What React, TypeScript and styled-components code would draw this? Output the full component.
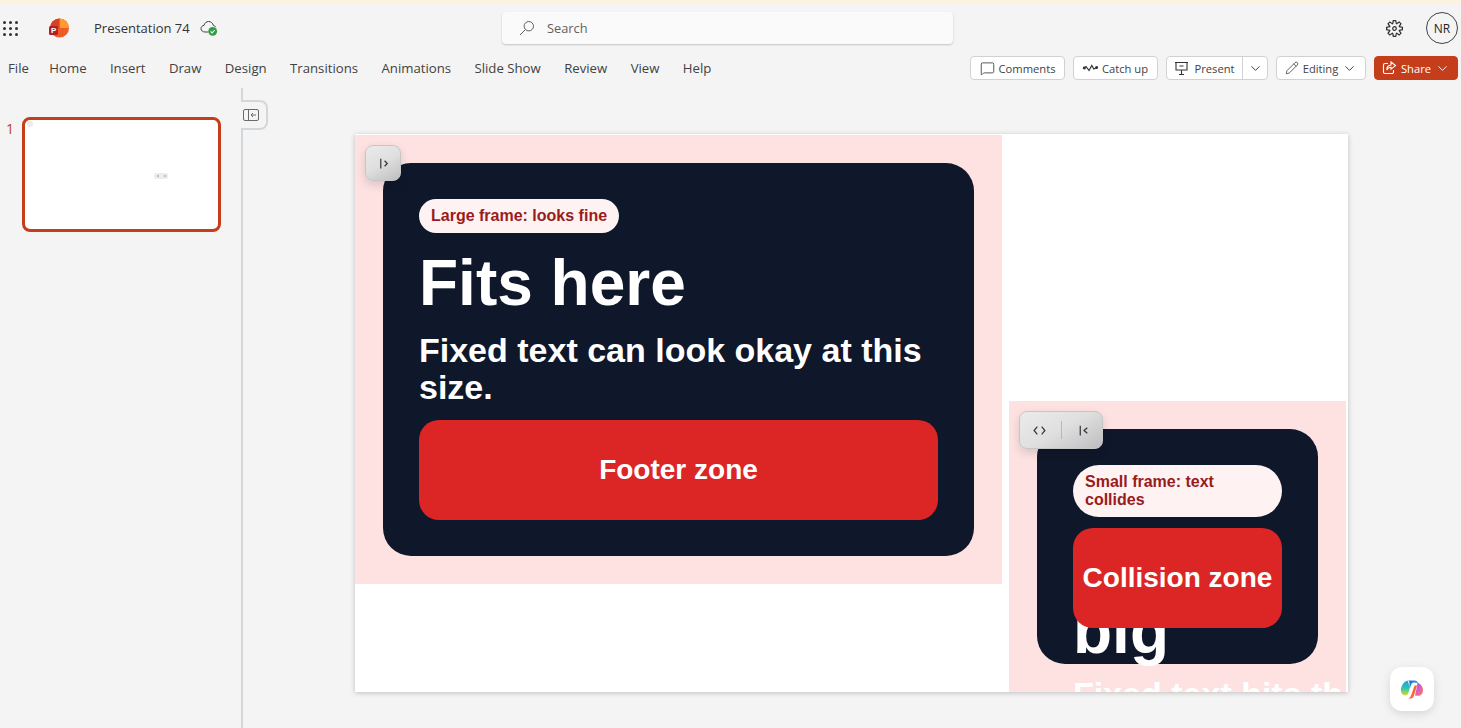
import React from 'react';
import styled, { createGlobalStyle } from 'styled-components';
import { ChevronDown, MessageSquare, Pencil } from 'lucide-react';
import { VscSettingsGear } from 'react-icons/vsc';

const Global = createGlobalStyle`
  html, body {
    margin: 0;
    height: 100%;
    overflow: hidden;
    background: #f4f4f4;
  }
  * {
    box-sizing: border-box;
  }
`;

const uiFont = `'Open Sans', 'Noto Sans', sans-serif`;
const slideFont = `'Liberation Sans', Arial, sans-serif`;

const Page = styled.div`
  height: 728px;
  display: flex;
  flex-direction: column;
  background: #f4f4f4;
  border-top: 3px solid #fdf1df;
  font-family: ${uiFont};
  color: #3b3b3b;
  overflow: hidden;
`;

const TitleBar = styled.header`
  height: 50px;
  flex: none;
  display: grid;
  grid-template-columns: 502px 451px 1fr;
  align-items: center;
`;

const TitleLeft = styled.div`
  display: flex;
  align-items: center;
`;

const Waffle = styled.div`
  margin-left: 3px;
  width: 15px;
  display: grid;
  grid-template-columns: repeat(3, 3px);
  gap: 3px;
`;

const Dot = styled.span`
  width: 3px;
  height: 3px;
  border-radius: 50%;
  background: #333;
`;

const DocName = styled.span`
  margin-left: 25px;
  font-size: 13px;
  color: #333;
`;

const LogoSvg = styled.svg`
  margin-left: 31px;
`;

const CloudSvg = styled.svg`
  margin-left: 9px;
`;

const SearchBox = styled.div`
  height: 32px;
  display: flex;
  align-items: center;
  gap: 12px;
  padding-left: 17px;
  background: #fafafa;
  border-radius: 4px;
  box-shadow: 0 1px 2px rgba(0, 0, 0, 0.2);
  font-size: 12.8px;
  color: #616161;
`;

const TitleRight = styled.div`
  display: flex;
  align-items: center;
  justify-content: flex-end;
  gap: 23px;
  padding-right: 3px;
`;

const Avatar = styled.div`
  width: 32px;
  height: 32px;
  border: 1px solid #424242;
  border-radius: 50%;
  display: flex;
  align-items: center;
  justify-content: center;
  font-size: 12px;
  color: #242424;
`;

const Ribbon = styled.nav`
  height: 32px;
  flex: none;
  display: flex;
  align-items: center;
  justify-content: space-between;
  padding: 0 3px 2px 8px;
`;

const Tabs = styled.div`
  display: flex;
  gap: 23.4px;
  font-size: 13.2px;
  color: #424242;
`;

const Tab = styled.span`
  &:first-child {
    margin-right: -3px;
  }
`;

const Actions = styled.div`
  display: flex;
  gap: 8px;
`;

const ActionButton = styled.button<{ $width: number; $primary?: boolean }>`
  width: ${(p) => p.$width}px;
  height: 24px;
  padding: 0;
  display: flex;
  align-items: center;
  justify-content: center;
  gap: 4px;
  border: 1px solid ${(p) => (p.$primary ? '#c43e1c' : '#d1d1d1')};
  border-radius: 4px;
  background: ${(p) => (p.$primary ? '#c43e1c' : '#fff')};
  color: ${(p) => (p.$primary ? '#fff' : '#424242')};
  font-family: ${uiFont};
  font-size: 11.2px;
`;

const SplitButton = styled.div`
  width: 102px;
  height: 24px;
  display: flex;
  border: 1px solid #d1d1d1;
  border-radius: 4px;
  background: #fff;
  font-size: 11.2px;
  color: #424242;
`;

const SplitMain = styled.div`
  flex: 1;
  display: flex;
  align-items: center;
  justify-content: center;
  gap: 5px;
  border-right: 1px solid #d1d1d1;
`;

const SplitArrow = styled.div`
  width: 24px;
  display: flex;
  align-items: center;
  justify-content: center;
`;

const Workspace = styled.main`
  flex: 1;
  min-height: 0;
  display: flex;
`;

const Sidebar = styled.aside`
  position: relative;
  width: 243px;
  flex: none;
  margin-top: 3px;
  padding: 29px 0 0 6px;
  display: flex;
  align-items: flex-start;
  gap: 8px;
  border-right: 2px solid #d3d6da;
`;

const SlideNumber = styled.span`
  margin-top: 2px;
  font-size: 14px;
  line-height: 20px;
  color: #c43e1c;
`;

const Thumb = styled.div`
  position: relative;
  width: 199px;
  height: 115px;
  background: #fff;
  border: 3px solid #c43e1c;
  border-radius: 8px;
`;

const ThumbMark = styled.span<{ $left: number; $top: number; $width: number }>`
  position: absolute;
  left: ${(p) => p.$left}px;
  top: ${(p) => p.$top}px;
  width: ${(p) => p.$width}px;
  height: 6px;
  display: flex;
  align-items: center;
  justify-content: space-around;
  border-radius: 2px;
  background: #ececec;
`;

const ThumbDot = styled.span`
  width: 2px;
  height: 2px;
  background: #bdbdbd;
`;

const CollapseTab = styled.div`
  position: absolute;
  top: 12px;
  left: 241px;
  width: 27px;
  height: 30px;
  padding-left: 2px;
  display: flex;
  align-items: center;
  background: #f4f4f4;
  border: 2px solid #d3d6da;
  border-left: none;
  border-radius: 0 8px 8px 0;
`;

const Canvas = styled.section`
  flex: 1;
  padding: 49px 0 0 112px;
`;

const Slide = styled.div`
  position: relative;
  width: 993px;
  height: 558px;
  background: #fff;
  overflow: hidden;
  box-shadow: 0 1px 5px rgba(0, 0, 0, 0.22);
`;

const Frame = styled.div<{ $left: number; $top: number; $width: number; $height: number }>`
  position: absolute;
  left: ${(p) => p.$left}px;
  top: ${(p) => p.$top}px;
  width: ${(p) => p.$width}px;
  height: ${(p) => p.$height}px;
  padding: 28px;
  background: #fee2e2;
  font-family: ${slideFont};
  font-weight: 700;
`;

const Card = styled.div<{ $height: number }>`
  position: relative;
  height: ${(p) => p.$height}px;
  padding: 36px;
  display: flex;
  flex-direction: column;
  align-items: flex-start;
  background: #0f172a;
  border-radius: 28px;
  color: #fff;
`;

const Pill = styled.div<{ $small?: boolean }>`
  width: ${(p) => (p.$small ? '100%' : 'auto')};
  flex: none;
  padding: 8px 12px;
  border-radius: 26px;
  background: #fef2f2;
  color: #991b1b;
  font-size: 16px;
  line-height: 18px;
`;

const Heading = styled.div<{ $top: number }>`
  margin-top: ${(p) => p.$top}px;
  font-size: 64px;
  line-height: 64px;
`;

const Body = styled.div<{ $top: number; $nowrap?: boolean }>`
  margin-top: ${(p) => p.$top}px;
  font-size: 34px;
  line-height: 37.4px;
  white-space: ${(p) => (p.$nowrap ? 'nowrap' : 'normal')};
`;

const Zone = styled.div<{ $top: number }>`
  position: absolute;
  top: ${(p) => p.$top}px;
  left: 36px;
  right: 36px;
  height: 100px;
  display: flex;
  align-items: center;
  justify-content: center;
  background: #dc2626;
  border-radius: 20px;
  font-size: 28px;
  white-space: nowrap;
`;

const FloatBar = styled.div<{ $left: number; $top: number; $width: number; $height: number }>`
  position: absolute;
  left: ${(p) => p.$left}px;
  top: ${(p) => p.$top}px;
  width: ${(p) => p.$width}px;
  height: ${(p) => p.$height}px;
  display: flex;
  align-items: center;
  justify-content: center;
  gap: 15px;
  background: linear-gradient(150deg, #ecebeb 0%, #e0dfdf 50%, #bdbdc0 100%);
  border: 1px solid #c6c6c6;
  border-radius: 8px;
  box-shadow: 0 4px 10px rgba(0, 0, 0, 0.14);
`;

const BarDivider = styled.span`
  width: 1px;
  height: 18px;
  background: #b9b9b9;
`;

const CopilotButton = styled.div`
  position: absolute;
  left: 1390px;
  top: 667px;
  width: 44px;
  height: 44px;
  display: flex;
  align-items: center;
  justify-content: center;
  background: #fff;
  border-radius: 12px;
  box-shadow: 0 3px 10px rgba(0, 0, 0, 0.12);
`;

const PptLogo = () => (
  <LogoSvg width="20" height="20" viewBox="0 0 20 20">
    <circle cx="10.5" cy="10" r="9.5" fill="#ef5a28" />
    <path d="M10.5 .5a9.5 9.5 0 0 1 9.5 9.5h-9.5z" fill="#ff9a2e" />
    <path d="M1 10a9.5 9.5 0 0 1 9.5-9.5V10z" fill="#d9401f" />
    <rect x="0" y="8" width="9" height="9" rx="1.5" fill="#b01f2c" />
    <text x="2.1" y="15.4" fontSize="8" fontWeight="700" fontFamily={slideFont} fill="#fff">
      P
    </text>
  </LogoSvg>
);

const CloudCheck = () => (
  <CloudSvg width="19" height="18" viewBox="0 0 19 18" fill="none">
    <path
      d="M6 13C3.8 13 2 11.6 2 9.6 2 7.8 3.4 6.5 5 6.4 5.6 4 7.4 2.5 9.6 2.5c2.4 0 4.2 1.6 4.7 3.9 1 .1 2 .8 2.3 1.8"
      stroke="#424242"
      strokeWidth="1"
    />
    <path d="M6 13h3.5" stroke="#424242" strokeWidth="1" />
    <circle cx="13.7" cy="12.3" r="4.4" fill="#2f9e44" />
    <path d="M11.6 12.4l1.5 1.5 2.7-2.9" stroke="#fff" strokeWidth="1.1" />
  </CloudSvg>
);

const SearchGlyph = () => (
  <svg width="16" height="16" viewBox="0 0 16 16" fill="none" stroke="#616161" strokeWidth="1">
    <circle cx="9.8" cy="6.2" r="4.7" />
    <path d="M6.4 9.6L1 15" />
  </svg>
);

const CatchUpGlyph = () => (
  <svg width="15" height="10" viewBox="0 0 15 10" fill="none" stroke="#333" strokeWidth="1.2">
    <path d="M1 5l2-1.5L6 7.5 8.8 2.5 10.8 6l3-1.5" />
    <circle cx="1.3" cy="5" r="0.9" fill="#333" />
    <circle cx="13.6" cy="4.6" r="0.9" fill="#333" />
  </svg>
);

const PresentGlyph = () => (
  <svg width="15" height="15" viewBox="0 0 15 15" fill="none" stroke="#333" strokeWidth="1.1">
    <path d="M1 1.5h13M2 1.5v7.5h11V1.5M5.5 5h4M7.5 9v4M5 13.5h5" />
  </svg>
);

const ShareGlyph = () => (
  <svg width="15" height="14" viewBox="0 0 15 14" fill="none" stroke="#fff" strokeWidth="1.1">
    <path d="M6 2.5H3A1.5 1.5 0 0 0 1.5 4v7A1.5 1.5 0 0 0 3 12.5h7a1.5 1.5 0 0 0 1.5-1.5V9" />
    <path d="M9 1l4.5 3.6L9 8.2V6.2C7 6.2 5.6 7 4.8 9c0-3 1.6-4.8 4.2-5z" />
  </svg>
);

const PanelGlyph = () => (
  <svg width="16" height="12" viewBox="0 0 16 12" fill="none" stroke="#6a6a6a" strokeWidth="1">
    <rect x="0.5" y="0.5" width="15" height="11" rx="1.5" />
    <path d="M5.5 0.5v11M13 6H8M10 4L8 6l2 2" />
  </svg>
);

const BarGlyph = ({ d }: { d: string }) => (
  <svg width="13" height="13" viewBox="0 0 12 12" fill="none" stroke="#333" strokeWidth="1.1">
    <path d={d} />
  </svg>
);

const CopilotLogo = () => (
  <svg width="24" height="24" viewBox="0 0 24 24">
    <defs>
      <linearGradient id="cpA" x1="0" y1="0" x2="0" y2="1">
        <stop offset="0" stopColor="#1f9be8" />
        <stop offset="0.55" stopColor="#35c7a5" />
        <stop offset="1" stopColor="#e6d82f" />
      </linearGradient>
      <linearGradient id="cpB" x1="0" y1="0" x2="1" y2="1">
        <stop offset="0" stopColor="#a35bdc" />
        <stop offset="0.6" stopColor="#e85fb0" />
        <stop offset="1" stopColor="#f78a3a" />
      </linearGradient>
      <linearGradient id="cpC" x1="0" y1="0" x2="1" y2="0">
        <stop offset="0" stopColor="#1a6fdc" />
        <stop offset="1" stopColor="#1f9be8" />
      </linearGradient>
    </defs>
    <path d="M7.5 3.5C4 4.5 1.5 8 1 12c-.4 3.5 1.2 6.5 4 6.5 2 0 3-1.3 3.6-3.3L10 10z" fill="url(#cpA)" />
    <path d="M8 3.5h6.5c2 0 3 1 3.5 2.6L14 5.5c-1.5 0-2.5.8-3 2.5l-1 3C9.5 6 9.5 4 8 3.5z" fill="url(#cpC)" />
    <path d="M17.5 5.5c3 1.2 5.5 4 5.5 7.5 0 4-2.6 6.2-5.5 5.8l-2.5-.3 1.5-7z" fill="url(#cpB)" />
    <path d="M14.5 8.5h2.5L13.8 19c-.5 1.6-1.6 2.5-3 2.5H7.5c2 0 3-1.2 3.6-3.2z" fill="#f3683c" />
    <path d="M11.8 10.5L13.5 8.5 10.8 18.5 9.5 17z" fill="#fff" />
  </svg>
);

const tabs = ['File', 'Home', 'Insert', 'Draw', 'Design', 'Transitions', 'Animations', 'Slide Show', 'Review', 'View', 'Help'];

const App = () => {
  return (
    <Page>
      <Global />
      <TitleBar>
        <TitleLeft>
          <Waffle>
            {Array.from({ length: 9 }).map((_, i) => (
              <Dot key={i} />
            ))}
          </Waffle>
          <PptLogo />
          <DocName>Presentation 74</DocName>
          <CloudCheck />
        </TitleLeft>
        <SearchBox>
          <SearchGlyph />
          Search
        </SearchBox>
        <TitleRight>
          <VscSettingsGear size={17} color="#333" />
          <Avatar>NR</Avatar>
        </TitleRight>
      </TitleBar>
      <Ribbon>
        <Tabs>
          {tabs.map((t) => (
            <Tab key={t}>{t}</Tab>
          ))}
        </Tabs>
        <Actions>
          <ActionButton $width={95}>
            <MessageSquare size={15} strokeWidth={1.3} color="#333" />
            Comments
          </ActionButton>
          <ActionButton $width={85}>
            <CatchUpGlyph />
            Catch up
          </ActionButton>
          <SplitButton>
            <SplitMain>
              <PresentGlyph />
              Present
            </SplitMain>
            <SplitArrow>
              <ChevronDown size={15} strokeWidth={1.5} color="#333" />
            </SplitArrow>
          </SplitButton>
          <ActionButton $width={90}>
            <Pencil size={14} strokeWidth={1.3} color="#333" />
            Editing
            <ChevronDown size={15} strokeWidth={1.5} color="#333" />
          </ActionButton>
          <ActionButton $width={84} $primary>
            <ShareGlyph />
            Share
            <ChevronDown size={15} strokeWidth={1.5} />
          </ActionButton>
        </Actions>
      </Ribbon>
      <Workspace>
        <Sidebar>
          <SlideNumber>1</SlideNumber>
          <Thumb>
            <ThumbMark $left={2} $top={1} $width={6} />
            <ThumbMark $left={129} $top={53} $width={14}>
              <ThumbDot />
              <ThumbDot />
            </ThumbMark>
          </Thumb>
          <CollapseTab>
            <PanelGlyph />
          </CollapseTab>
        </Sidebar>
        <Canvas>
          <Slide>
            <Frame $left={0} $top={1} $width={647} $height={449}>
              <Card $height={393}>
                <Pill>Large frame: looks fine</Pill>
                <Heading $top={18}>Fits here</Heading>
                <Body $top={17}>Fixed text can look okay at this size.</Body>
                <Zone $top={257}>Footer zone</Zone>
              </Card>
            </Frame>
            <Frame $left={654} $top={267} $width={337} $height={291}>
              <Card $height={235}>
                <Pill $small>Small frame: text collides</Pill>
                <Heading $top={82}>big</Heading>
                <Body $top={13} $nowrap>
                  Fixed text hits the
                </Body>
                <Zone $top={99}>Collision zone</Zone>
              </Card>
            </Frame>
            <FloatBar $left={10} $top={11} $width={36} $height={36}>
              <BarGlyph d="M3.5 1.5v9M7 3.5L9.5 6 7 8.5" />
            </FloatBar>
            <FloatBar $left={664} $top={277} $width={84} $height={38}>
              <BarGlyph d="M4 2.5L1 6l3 3.5M8 2.5L11 6 8 9.5" />
              <BarDivider />
              <BarGlyph d="M3 1.5v9M9.5 3.5L6.5 6l3 2.5" />
            </FloatBar>
          </Slide>
        </Canvas>
      </Workspace>
      <CopilotButton>
        <CopilotLogo />
      </CopilotButton>
    </Page>
  );
};

export default App;
